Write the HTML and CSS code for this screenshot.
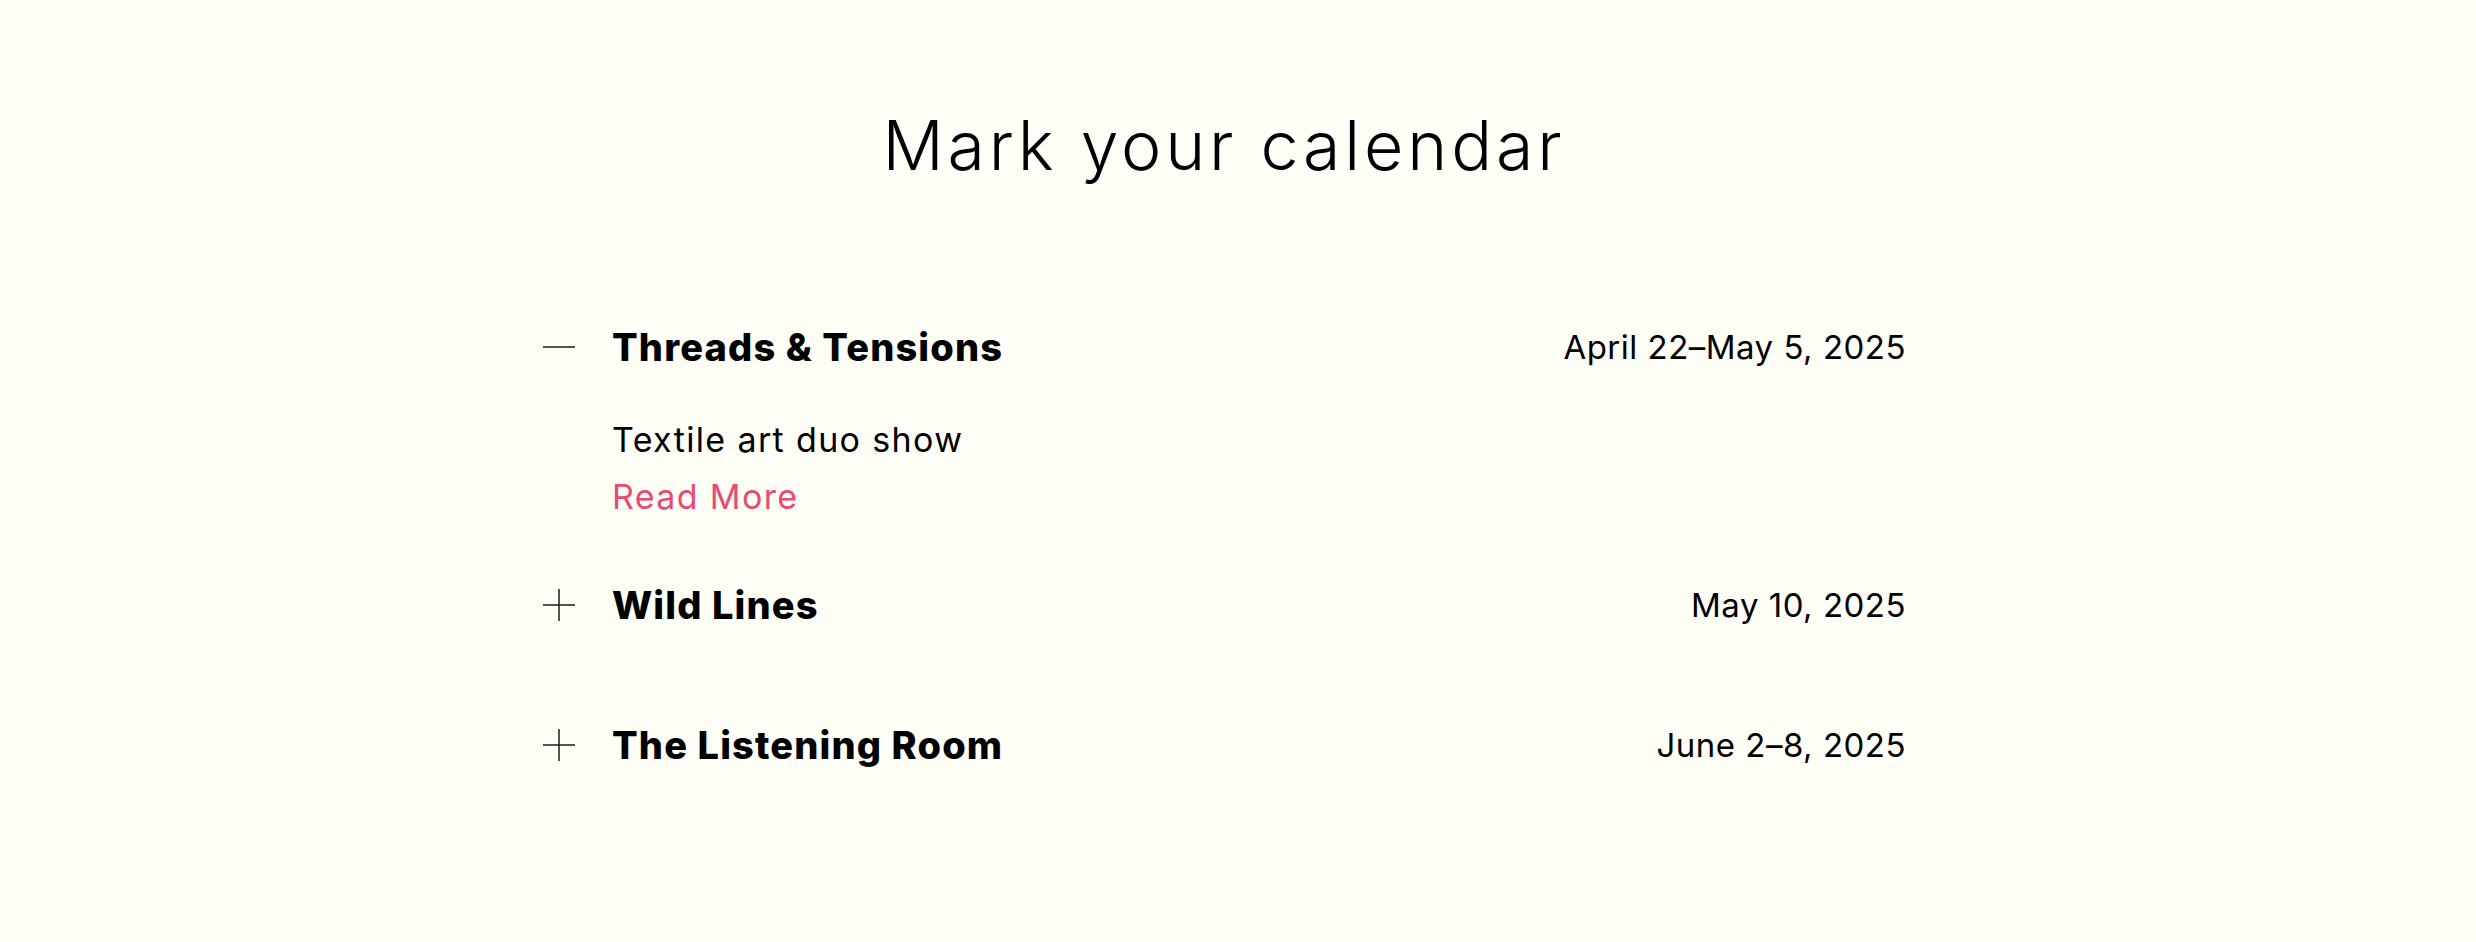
FILE: index.html
```html
<!DOCTYPE html>
<html lang="en">
<head>
    <meta charset="UTF-8">
    <meta name="viewport" content="width=device-width, initial-scale=1.0">
    <title>Mark your calendar</title>
    <link rel="stylesheet" href="styles.css">
</head>
<body>

<div class="page">
    <section class="calendar">
        <h1>Mark your calendar</h1>

        <div class="events">
            <div class="event open">
                <button type="button" class="event-head" onclick="toggleEvent(this)">
                    <svg class="toggle" viewBox="0 0 34 34" width="34" height="34">
                        <line x1="1" y1="17" x2="33" y2="17"/>
                        <line class="vline" x1="17" y1="1" x2="17" y2="33"/>
                    </svg>
                    <span class="event-title">Threads &amp; Tensions</span>
                    <span class="event-date">April 22–May 5, 2025</span>
                </button>
                <div class="event-body">
                    <p>Textile art duo show</p>
                    <a href="#" class="read-more">Read More</a>
                </div>
            </div>

            <div class="event">
                <button type="button" class="event-head" onclick="toggleEvent(this)">
                    <svg class="toggle" viewBox="0 0 34 34" width="34" height="34">
                        <line x1="1" y1="17" x2="33" y2="17"/>
                        <line class="vline" x1="17" y1="1" x2="17" y2="33"/>
                    </svg>
                    <span class="event-title">Wild Lines</span>
                    <span class="event-date">May 10, 2025</span>
                </button>
                <div class="event-body">
                    <p>Drawings and prints by emerging artists</p>
                    <a href="#" class="read-more">Read More</a>
                </div>
            </div>

            <div class="event">
                <button type="button" class="event-head" onclick="toggleEvent(this)">
                    <svg class="toggle" viewBox="0 0 34 34" width="34" height="34">
                        <line x1="1" y1="17" x2="33" y2="17"/>
                        <line class="vline" x1="17" y1="1" x2="17" y2="33"/>
                    </svg>
                    <span class="event-title">The Listening Room</span>
                    <span class="event-date">June 2–8, 2025</span>
                </button>
                <div class="event-body">
                    <p>Sound installation week</p>
                    <a href="#" class="read-more">Read More</a>
                </div>
            </div>
        </div>
    </section>
</div>

<script>
    // open / close one event row
    function toggleEvent(head) {
        head.parentElement.classList.toggle('open');
    }
</script>

</body>
</html>
```

FILE: styles.css
```css
/* Global Styles */
body {
    margin: 0;
    background-color: #fefef6;
    font-family: 'Inter', 'Open Sans', sans-serif;
    color: #000;
}

.page {
    padding: 106px 28px 120px 0;
}

.calendar {
    max-width: 1364px;
    margin: 0 auto;
}

/* Header */
h1 {
    margin: 0 0 92px;
    font-size: 68px;
    line-height: 79px;
    font-weight: 300;
    letter-spacing: 0.057em;
    text-align: center;
}

/* Event rows */
.event-head {
    display: flex;
    align-items: center;
    width: 100%;
    padding: 47px 0;
    border: none;
    background: none;
    font: inherit;
    color: inherit;
    text-align: left;
    cursor: pointer;
}

.toggle {
    flex: none;
    stroke: #1a1a1a;
    stroke-width: 1.5;
    margin-right: 36px;
}

.event.open .vline {
    display: none;
}

.event-title {
    flex: 1;
    font-size: 38px;
    line-height: 46px;
    font-weight: 800;
    letter-spacing: 0.03em;
}

.event-date {
    font-size: 33px;
    line-height: 46px;
    font-weight: 400;
    letter-spacing: 0.015em;
}

/* Event details */
.event-body {
    display: none;
    padding: 0 0 15px 70px;
    font-size: 34px;
    line-height: 46px;
    letter-spacing: 0.04em;
}

.event.open .event-body {
    display: block;
}

.event-body p {
    margin: 0 0 11px;
}

.read-more {
    color: #e94a72;
    text-decoration: none;
}
```
